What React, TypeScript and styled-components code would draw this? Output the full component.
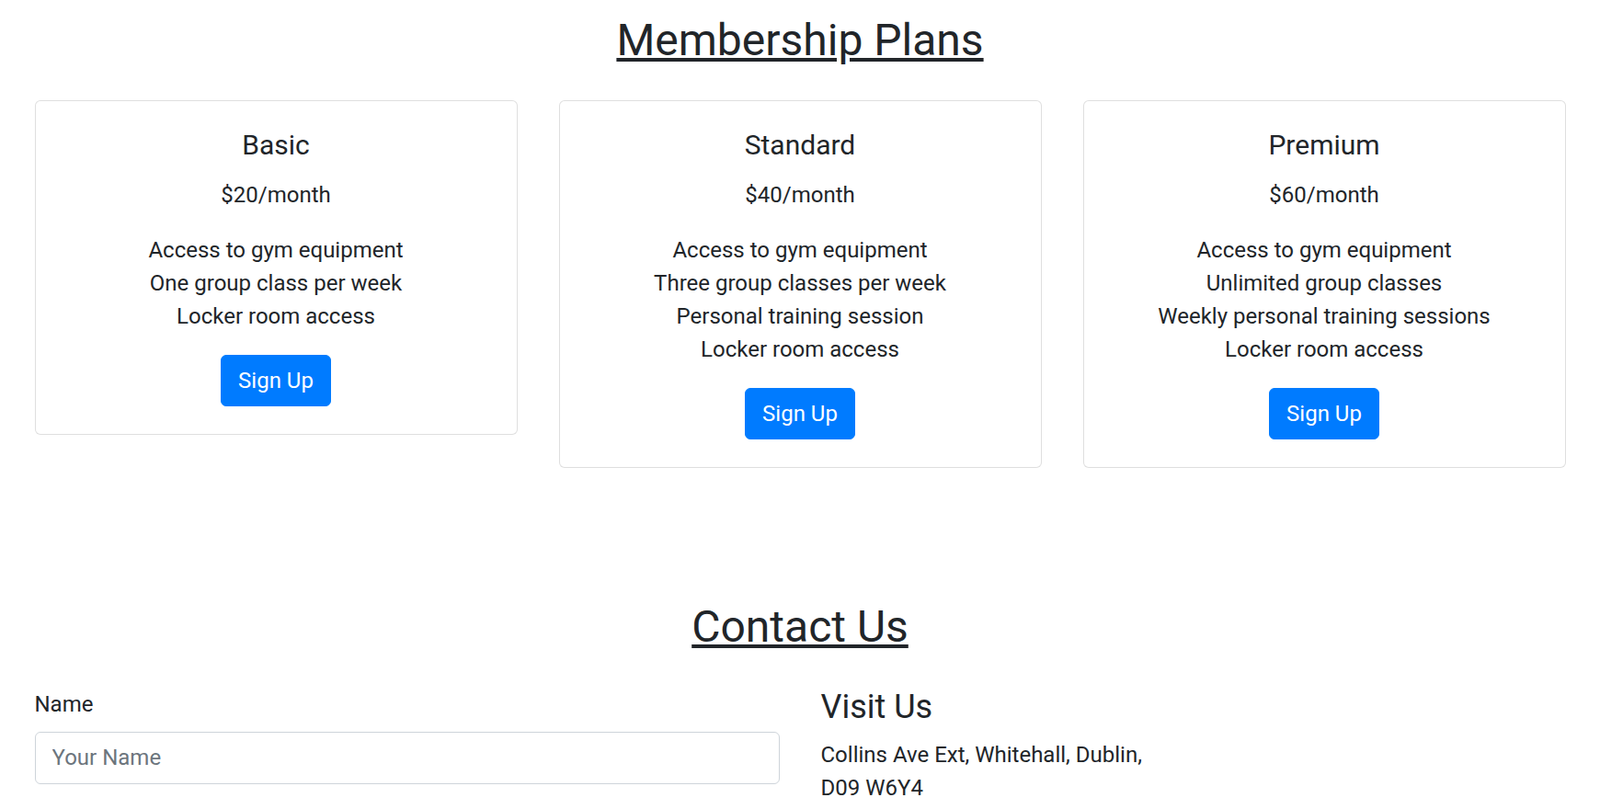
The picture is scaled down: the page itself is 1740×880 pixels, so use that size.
import React from "react";
import styled, { createGlobalStyle } from "styled-components";

const GlobalStyle = createGlobalStyle`
  * { box-sizing: border-box; }
  body {
    margin: 0;
    background: #ffffff;
    color: #212529;
    font-family: Roboto, "Liberation Sans", Arial, sans-serif;
    font-size: 24px;
    line-height: 36px;
  }
`;

const Container = styled.div`
  width: 1710px;
  margin: 0 auto;
  padding-top: 15px;
`;

const Section = styled.section<{ $gap?: number }>`
  padding-top: ${(p) => p.$gap ?? 0}px;
`;

const SectionTitle = styled.h2`
  margin: 0;
  font-size: 48px;
  line-height: 57.6px;
  font-weight: 400;
  text-align: center;
  text-decoration: underline;
`;

const Grid = styled.div<{ $cols: number; $top: number }>`
  display: grid;
  grid-template-columns: repeat(${(p) => p.$cols}, 1fr);
  align-items: start;
  padding-top: ${(p) => p.$top}px;
`;

const Column = styled.div`
  padding: 0 22.5px;
  min-width: 0;
`;

const Card = styled.div`
  border: 1px solid rgba(0, 0, 0, 0.125);
  border-radius: 6px;
  padding: 30px;
  text-align: center;
  background: #fff;
`;

const PlanName = styled.h5`
  margin: 0 0 18px;
  font-size: 30px;
  line-height: 36px;
  font-weight: 400;
`;

const Price = styled.p`
  margin: 0 0 24px;
`;

const FeatureList = styled.ul`
  list-style: none;
  padding: 0;
  margin: 0 0 24px;
`;

const ButtonRow = styled.div`
  display: flex;
  justify-content: center;
`;

const PrimaryButton = styled.button`
  background: #007bff;
  border: 1px solid #007bff;
  color: #ffffff;
  border-radius: 6px;
  padding: 9px 18px;
  font-family: inherit;
  font-size: 24px;
  line-height: 36px;
  font-weight: 400;
  cursor: pointer;
`;

const Label = styled.label`
  display: block;
  margin-bottom: 12px;
`;

const TextInput = styled.input`
  display: block;
  width: 100%;
  height: 57px;
  padding: 9px 18px;
  border: 1px solid #ced4da;
  border-radius: 6px;
  font-family: inherit;
  font-size: 24px;
  line-height: 36px;
  color: #495057;
  &::placeholder {
    color: #6c757d;
  }
`;

const VisitTitle = styled.h4`
  margin: 0 0 12px;
  font-size: 36px;
  line-height: 43.2px;
  font-weight: 400;
`;

const Address = styled.p`
  margin: 0;
`;

const plans = [
  {
    name: "Basic",
    price: "$20/month",
    features: ["Access to gym equipment", "One group class per week", "Locker room access"],
  },
  {
    name: "Standard",
    price: "$40/month",
    features: [
      "Access to gym equipment",
      "Three group classes per week",
      "Personal training session",
      "Locker room access",
    ],
  },
  {
    name: "Premium",
    price: "$60/month",
    features: [
      "Access to gym equipment",
      "Unlimited group classes",
      "Weekly personal training sessions",
      "Locker room access",
    ],
  },
];

export default function App() {
  return (
    <>
      <GlobalStyle />
      <Container>
        <Section>
          <SectionTitle>Membership Plans</SectionTitle>
          <Grid $cols={3} $top={36}>
            {plans.map((plan) => (
              <Column key={plan.name}>
                <Card>
                  <PlanName>{plan.name}</PlanName>
                  <Price>{plan.price}</Price>
                  <FeatureList>
                    {plan.features.map((f) => (
                      <li key={f}>{f}</li>
                    ))}
                  </FeatureList>
                  <ButtonRow>
                    <PrimaryButton type="button">Sign Up</PrimaryButton>
                  </ButtonRow>
                </Card>
              </Column>
            ))}
          </Grid>
        </Section>
        <Section $gap={144}>
          <SectionTitle>Contact Us</SectionTitle>
          <Grid $cols={2} $top={37.5}>
            <Column>
              <Label htmlFor="name">Name</Label>
              <TextInput id="name" type="text" placeholder="Your Name" />
            </Column>
            <Column>
              <VisitTitle>Visit Us</VisitTitle>
              <Address>
                Collins Ave Ext, Whitehall, Dublin,
                <br />
                D09 W6Y4
              </Address>
            </Column>
          </Grid>
        </Section>
      </Container>
    </>
  );
}
